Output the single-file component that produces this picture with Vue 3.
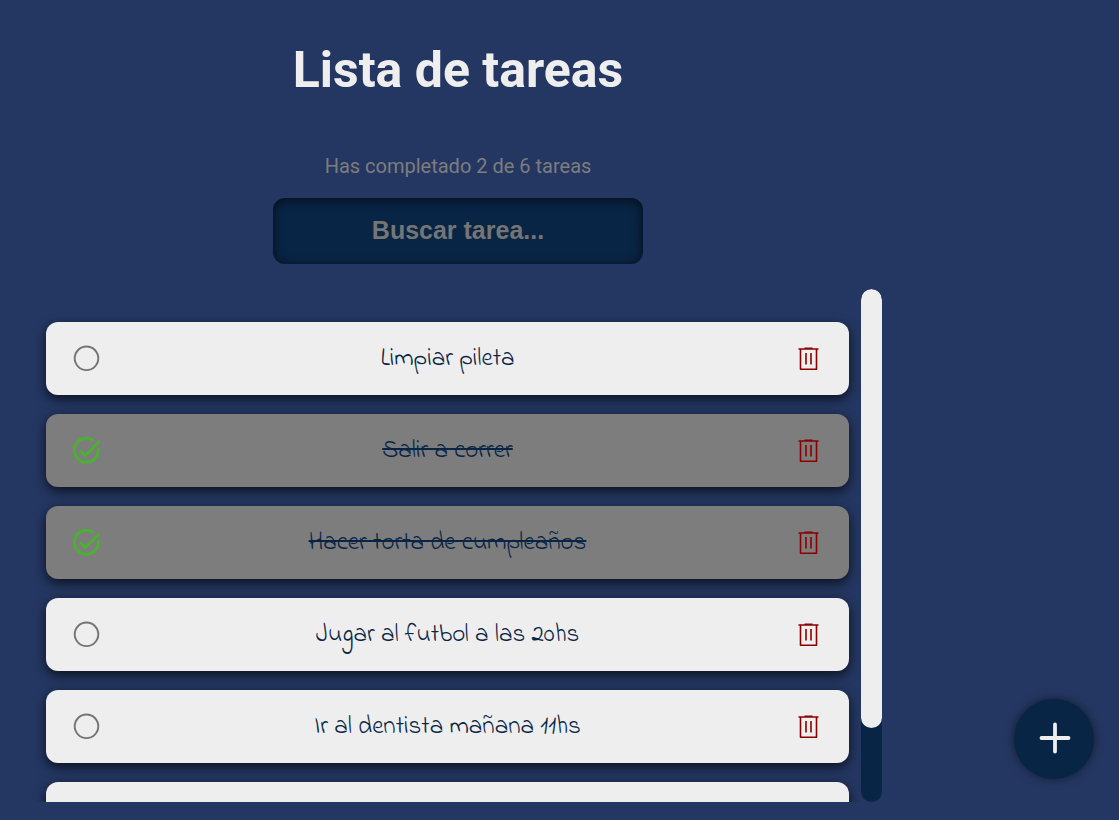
<script setup>
import { ref, computed, onMounted, onBeforeUnmount, watch, nextTick } from 'vue'

const search = ref('')
const tasks = ref([
  { id: 1, text: 'Limpiar pileta', done: false },
  { id: 2, text: 'Salir a correr', done: true },
  { id: 3, text: 'Hacer torta de cumpleaños', done: true },
  { id: 4, text: 'Jugar al futbol a las 20hs', done: false },
  { id: 5, text: 'Ir al dentista mañana 11hs', done: false },
  { id: 6, text: '', done: false }
])

const completed = computed(() => tasks.value.filter((t) => t.done).length)
const visible = computed(() =>
  tasks.value.filter((t) => t.text.toLowerCase().includes(search.value.toLowerCase()))
)

function remove(id) {
  tasks.value = tasks.value.filter((t) => t.id !== id)
}

// Scroll bar beside the list: thumb size and place follow the list's scroll state
const list = ref(null)
const thumbSize = ref(100)
const thumbTop = ref(0)

function measure() {
  const el = list.value
  if (!el) return
  thumbSize.value = (el.clientHeight / el.scrollHeight) * 100
  thumbTop.value = (el.scrollTop / el.scrollHeight) * 100
}

onMounted(() => {
  measure()
  window.addEventListener('resize', measure)
})
onBeforeUnmount(() => window.removeEventListener('resize', measure))
watch(visible, () => nextTick(measure))
</script>

<template>
  <div class="page">
    <main class="main">
      <h1 class="title">Lista de tareas</h1>
      <p class="summary">Has completado {{ completed }} de {{ tasks.length }} tareas</p>
      <input v-model="search" class="search" type="text" placeholder="Buscar tarea..." aria-label="Buscar tarea" />
      <div class="scroller">
        <ul ref="list" class="list" @scroll="measure">
          <li v-for="task in visible" :key="task.id" class="card" :class="{ done: task.done }">
            <button class="icon" type="button" aria-label="Completar tarea" @click="task.done = !task.done">
              <svg v-if="task.done" class="check" viewBox="0 0 28 28">
                <path d="M19.4 2.9A12 12 0 1 0 25.3 12.2" />
                <path d="M7.8 14.2l4.4 4.4L25.6 5.2" />
              </svg>
              <svg v-else class="circle" viewBox="0 0 28 28">
                <circle cx="13.5" cy="13.3" r="11.8" />
              </svg>
            </button>
            <span class="text">{{ task.text }}</span>
            <button class="icon" type="button" aria-label="Eliminar tarea" @click="remove(task.id)">
              <svg class="trash" viewBox="0 0 28 28">
                <path d="M4.5 4H24.5M10.5 3.4H18.5M6.5 4V24.2H22.5V4M12 8V19.5M17 8V19.5" />
              </svg>
            </button>
          </li>
        </ul>
        <div class="track" aria-hidden="true">
          <div class="thumb" :style="{ height: thumbSize + '%', top: thumbTop + '%' }"></div>
        </div>
      </div>
    </main>
    <aside class="side">
      <button class="add" type="button" aria-label="Agregar tarea">
        <svg viewBox="0 0 32 32"><path d="M16 2.5V29.5M2.5 16H29.5" /></svg>
      </button>
    </aside>
  </div>
</template>

<style>
body {
  margin: 0;
  background: #243762;
}
</style>

<style scoped>
.page {
  display: flex;
  height: 100vh;
  background: #243762;
  font-family: Roboto, sans-serif;
}
.main {
  flex: 1;
  min-width: 0;
  box-sizing: border-box;
  padding: 40px 34px 18px;
  display: flex;
  flex-direction: column;
  align-items: center;
}
.title {
  margin: 0;
  color: #eee;
  font-size: 50px;
  line-height: 60px;
  font-weight: 700;
}
.summary {
  margin: 54px 0 20px;
  color: #7d7d7d;
  font-size: 20px;
  line-height: 24px;
}
.search {
  box-sizing: border-box;
  width: 370px;
  max-width: 100%;
  height: 66px;
  flex: none;
  padding: 0 2px 2px;
  border: 0;
  border-radius: 12px;
  background: #092545;
  box-shadow: inset 0 2px 12px rgba(0, 0, 0, 0.65);
  color: #eee;
  font: 700 25px 'Liberation Sans', sans-serif;
  text-align: center;
  outline: none;
}
.search::placeholder {
  color: #757575;
}
.scroller {
  align-self: stretch;
  flex: 1;
  min-height: 0;
  display: flex;
  margin-top: 25px;
}
.list {
  flex: 1;
  min-width: 0;
  box-sizing: border-box;
  margin: 0;
  padding: 33px 12px;
  list-style: none;
  overflow-y: auto;
  scrollbar-width: none;
}
.track {
  position: relative;
  flex: none;
  width: 21px;
  background: #092545;
  border-radius: 12px;
  overflow: hidden;
}
.thumb {
  position: absolute;
  left: 0;
  right: 0;
  background: #eee;
  border-radius: 12px;
}
.card {
  display: flex;
  align-items: center;
  box-sizing: border-box;
  height: 73px;
  padding: 0 27px;
  border-radius: 12px;
  background: #eee;
  box-shadow: 0 4px 12px rgba(0, 0, 0, 0.7);
}
.card + .card {
  margin-top: 19px;
}
.card.done {
  background: #7d7d7d;
}
.text {
  flex: 1;
  color: #092545;
  font-family: 'Indie Flower', Lato, cursive;
  font-weight: 300;
  font-size: 25px;
  line-height: 30px;
  text-align: center;
}
.done .text {
  text-decoration: line-through 2px;
}
.icon {
  display: block;
  padding: 0;
  border: 0;
  background: none;
  cursor: pointer;
}
.icon svg {
  display: block;
  width: 28px;
  height: 28px;
  fill: none;
}
.circle {
  stroke: #757575;
  stroke-width: 1.9;
}
.check {
  stroke: #4cb033;
  stroke-width: 3;
  stroke-linecap: round;
  stroke-linejoin: round;
}
.trash {
  stroke: #8b0000;
  stroke-width: 1.6;
  stroke-linejoin: round;
}
.side {
  flex: none;
  width: 203px;
  box-sizing: border-box;
  padding: 0 25px 41px;
  display: flex;
  align-items: flex-end;
  justify-content: flex-end;
}
.add {
  display: flex;
  align-items: center;
  justify-content: center;
  width: 80px;
  height: 80px;
  padding: 0 0 2px 2px;
  border: 0;
  border-radius: 50%;
  background: #092545;
  box-shadow: 0 0 10px rgba(0, 0, 0, 0.5);
  cursor: pointer;
}
.add svg {
  width: 32px;
  height: 32px;
  fill: none;
  stroke: #eee;
  stroke-width: 3.8;
  stroke-linecap: round;
}
</style>
